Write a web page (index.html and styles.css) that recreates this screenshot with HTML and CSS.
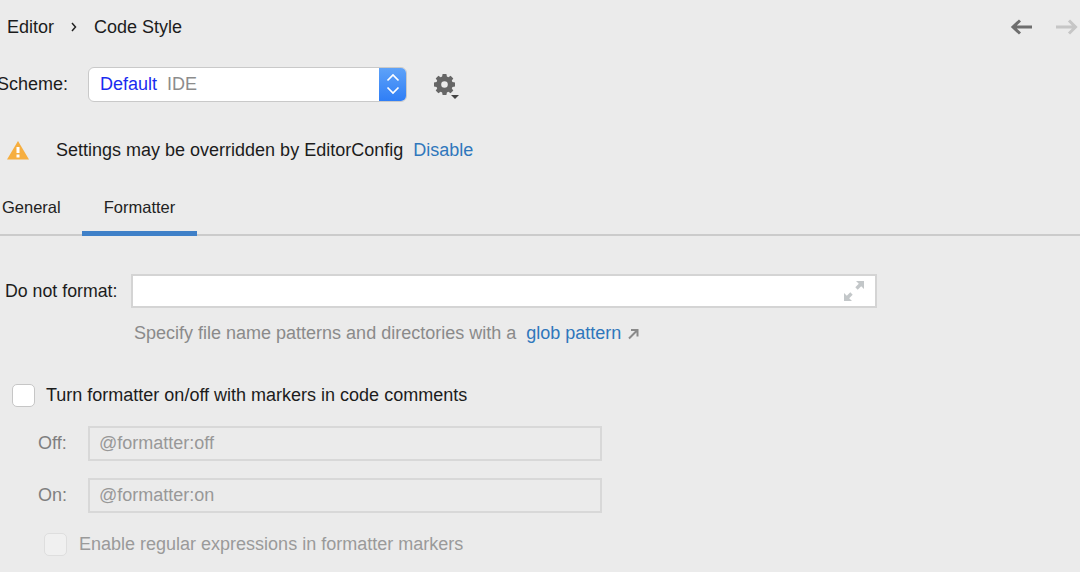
FILE: index.html
```html
<!DOCTYPE html>
<html lang="en">
<head>
<meta charset="utf-8">
<title>Code Style</title>
<link rel="stylesheet" href="styles.css">
</head>
<body>
<div class="page">
  <header class="crumbs">
    <span class="crumb">Editor</span>
    <svg class="crumb-sep" width="8" height="10" viewBox="0 0 8 10"><path d="M2 1l3.500 4L2 9" fill="none" stroke="#222" stroke-width="1.500"/></svg>
    <span class="crumb">Code Style</span>
    <span class="spacer"></span>
    <svg class="nav" width="24" height="16" viewBox="0 0 24 16"><path d="M24 8H5M12 1.500L5 8l7 6.500" fill="none" stroke="#6e6e6e" stroke-width="3"/></svg>
    <svg class="nav nav-next" width="24" height="16" viewBox="0 0 24 16"><path d="M0 8h19M13 1.500L19.500 8 13 14.500" fill="none" stroke="#c6c6c6" stroke-width="3"/></svg>
  </header>

  <div class="scheme">
    <span class="scheme-label">Scheme:</span>
    <div class="select">
      <span class="select-value"><span class="select-name">Default</span><span class="select-kind">IDE</span></span>
      <span class="select-btn">
        <svg width="14" height="24" viewBox="0 0 14 24"><path d="M1.500 8.500L7 3l5.500 5.500M1.500 15.500L7 21l5.500-5.500" fill="none" stroke="#fff" stroke-width="1.700"/></svg>
      </span>
    </div>
    <svg class="gear" width="28" height="30" viewBox="0 0 28 30">
      <path fill="#666" fill-rule="evenodd" d="M9.600 4h3.800l.5 2.600 1.500.6 2.200-1.500 2.700 2.700-1.500 2.200.6 1.500 2.600.5v3.800l-2.600.5-.6 1.500 1.500 2.200-2.700 2.700-2.200-1.500-1.500.6-.5 2.600H9.600l-.5-2.600-1.500-.6-2.200 1.500-2.700-2.700 1.500-2.200-.6-1.500L1 16.400v-3.800l2.600-.5.6-1.500-1.500-2.200 2.700-2.700 2.200 1.500 1.500-.6zM11.500 11.200a3.300 3.300 0 1 0 0 6.600 3.300 3.300 0 0 0 0-6.600z"/>
      <path fill="#444" d="M18 25h8l-4 4z"/>
    </svg>
  </div>

  <div class="notice">
    <svg class="warn" width="24" height="20" viewBox="0 0 24 20"><path fill="#f6ae3f" d="M12 1l11 18.500H1z"/><path fill="#fff" d="M10.500 7h3v6h-3zM10.500 14.500h3v3h-3z"/></svg>
    <span class="notice-text">Settings may be overridden by EditorConfig</span>
    <a class="link">Disable</a>
  </div>

  <nav class="tabs">
    <span class="tab">General</span>
    <span class="tab tab-active">Formatter</span>
  </nav>

  <div class="exclude">
    <span class="exclude-label">Do not format:</span>
    <div class="field">
      <svg width="22" height="22" viewBox="0 0 22 22"><path fill="#c3c7c9" d="M13 1h8v8l-2.800-2.800-3.500 3.500-2.400-2.400 3.500-3.500zM9 21H1v-8l2.800 2.800 3.500-3.500 2.400 2.400-3.500 3.500z"/></svg>
    </div>
  </div>
  <p class="hint">Specify file name patterns and directories with a <a class="link hint-link">glob pattern</a>
    <svg class="ext" width="12" height="12" viewBox="0 0 12 12"><path d="M2 10.500L9.500 3M4 2h6.500v6.500" fill="none" stroke="#8a8a8a" stroke-width="2"/></svg>
  </p>

  <label class="check-row">
    <span class="check"></span>
    <span>Turn formatter on/off with markers in code comments</span>
  </label>

  <div class="marker-row">
    <span class="marker-label">Off:</span>
    <div class="marker-input">@formatter:off</div>
  </div>
  <div class="marker-row marker-row-on">
    <span class="marker-label">On:</span>
    <div class="marker-input">@formatter:on</div>
  </div>

  <label class="check-row check-row-off">
    <span class="check check-off"></span>
    <span>Enable regular expressions in formatter markers</span>
  </label>
</div>
</body>
</html>
```

FILE: styles.css
```css
* { box-sizing: border-box; }
html, body { margin: 0; height: 100%; }
body {
  background: #ebebeb;
  font-family: "Liberation Sans", Arial, sans-serif;
  font-size: 18px;
  color: #1c1c1c;
  overflow: hidden;
}
.page { width: 1080px; height: 572px; overflow: hidden; }

.crumbs { display: flex; align-items: center; height: 28px; margin-top: 13px; padding-left: 7px; }
.crumb-sep { margin: 0 16px 0 16px; }
.spacer { flex: 1; }
.nav { margin-right: 24px; }
.nav-next { margin-right: 0; }

.scheme { display: flex; align-items: center; height: 36px; margin-top: 25px; margin-left: -3px; }
.scheme-label { width: 91px; }
.select { display: flex; width: 319px; height: 35px; background: #fff; border: 1px solid #c9c9c9; border-radius: 6px; overflow: hidden; }
.select-value { flex: 1; display: flex; align-items: center; padding-left: 11px; }
.select-name { color: #1a2cf0; margin-right: 10px; }
.select-kind { color: #8c8c8c; }
.select-btn { width: 27px; display: flex; align-items: center; justify-content: center; background: linear-gradient(#5ea2f8, #2f7ef6); }
.gear { margin-left: 26px; margin-top: 2px; }

.notice { display: flex; align-items: center; height: 24px; margin-top: 36px; padding-left: 6px; }
.warn { margin-right: 26px; }
.notice-text { margin-right: 10px; }
.link { color: #2f77bc; }

.tabs { display: flex; height: 55px; margin-top: 19px; border-bottom: 2px solid #cbcbcb; font-size: 16.500px; }
.tab { padding-top: 17px; margin-left: 2px; width: 80px; color: #222; }
.tab-active { width: 115px; margin-left: 0; text-align: center; border-bottom: 5px solid #3f80c8; height: 55px; }

.exclude { display: flex; align-items: center; height: 34px; margin-top: 38px; padding-left: 5px; }
.exclude-label { width: 126px; font-size: 17.750px; }
.field { width: 746px; height: 34px; background: #fff; border: 2px solid #d4d4d4; display: flex; align-items: center; justify-content: flex-end; padding-right: 10px; }

.hint { margin: 14px 0 0 134px; height: 22px; line-height: 22px; color: #8a8a8a; display: flex; align-items: center; white-space: pre; }
.hint-link { margin-left: 5px; }
.ext { margin-left: 6px; margin-top: 2px; }

.check-row { display: flex; align-items: center; height: 24px; margin-top: 39px; padding-left: 12px; }
.check { width: 23px; height: 23px; margin-right: 11px; background: #fff; border: 1px solid #c6c6c6; border-radius: 5px; }

.marker-row { display: flex; align-items: center; height: 35px; margin-top: 19px; padding-left: 38px; color: #7f7f7f; }
.marker-row-on { margin-top: 17px; }
.marker-label { width: 50px; }
.marker-input { width: 514px; height: 35px; line-height: 31px; padding-left: 9px; border: 2px solid #d8d8d8; color: #989898; }

.check-row-off { margin-top: 19px; padding-left: 44px; color: #9a9a9a; }
.check-off { background: #f0f0f0; border-color: #dedede; margin-right: 12px; }
```
